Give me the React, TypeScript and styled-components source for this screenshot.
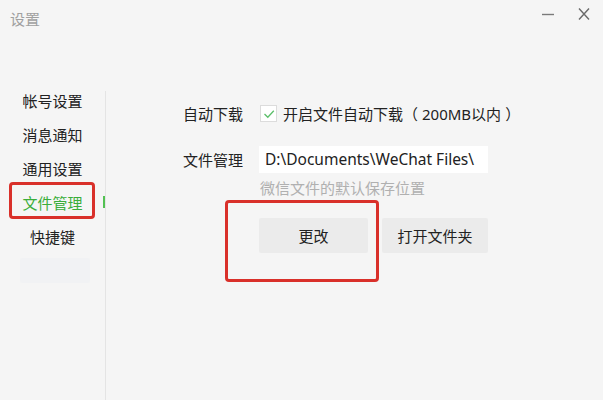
import React from "react";
import styled, { createGlobalStyle } from "styled-components";

const Global = createGlobalStyle`
  html, body { margin: 0; padding: 0; background: #f5f5f5; }
  body { font-family: "Noto Sans", "Noto Sans CJK SC", sans-serif; color: #333; }
`;

const Window = styled.div`
  width: 603px;
  height: 400px;
  background: #f5f5f5;
  display: flex;
  flex-direction: column;
  overflow: hidden;
`;

const TitleBar = styled.div`
  height: 40px;
  display: flex;
  align-items: flex-start;
  justify-content: space-between;
  padding: 0 12px 0 10px;
`;

const Title = styled.div`
  font-family: "Noto Sans CJK SC", sans-serif;
  font-size: 15px;
  line-height: 20px;
  margin-top: 9px;
  color: #a0a0a0;
`;

const WinControls = styled.div`
  display: flex;
  gap: 22px;
  margin-top: 7px;
`;

const CtrlBtn = styled.div`
  width: 14px;
  height: 14px;
  display: flex;
  align-items: center;
  justify-content: center;
`;

const Body = styled.div`
  flex: 1;
  display: flex;
  margin-top: 51px;
`;

const Sidebar = styled.div`
  width: 105px;
  border-right: 1px solid #e4e4e4;
  display: flex;
  flex-direction: column;
  gap: 14px;
`;

const NavItem = styled.div<{ $active?: boolean }>`
  position: relative;
  height: 20px;
  line-height: 20px;
  text-align: center;
  font-family: "Noto Sans CJK SC", sans-serif;
  font-size: 15px;
  color: ${(p) => (p.$active ? "#3aae3a" : "#222")};
  ${(p) =>
    p.$active &&
    `
    &::before {
      content: "";
      position: absolute;
      right: 0;
      top: 3px;
      width: 2px;
      height: 12px;
      background: #52c152;
    }
  `}
`;

const Highlight = styled.span`
  position: relative;
  &::after {
    content: "";
    position: absolute;
    left: -13px;
    right: -12px;
    top: -10px;
    bottom: -6px;
    border: 3px solid #d9302a;
    border-radius: 4px;
  }
`;

const GhostItem = styled.div`
  margin: 0 15px 0 20px;
  height: 25px;
  margin-top: -3px;
  background: #f1f2f4;
  border-radius: 2px;
`;

const Content = styled.div`
  position: relative;
  flex: 1;
  padding: 9px 0 0 77px;
  display: flex;
  flex-direction: column;
`;

const Row = styled.div<{ $gap?: number }>`
  display: flex;
  align-items: center;
  height: 27px;
  margin-top: ${(p) => p.$gap ?? 0}px;
`;

const Label = styled.div`
  width: 76px;
  font-family: "Noto Sans CJK SC", sans-serif;
  font-size: 15px;
  color: #222;
`;

const Checkbox = styled.div`
  width: 15px;
  height: 15px;
  background: #fff;
  border: 1px solid #dcdcdc;
  display: flex;
  align-items: center;
  justify-content: center;
  margin-left: 1px;
  margin-right: 6px;
`;

const CheckText = styled.div`
  font-family: "Noto Sans CJK SC", sans-serif;
  font-size: 15px;
  color: #222;
`;

const Inner = styled.span`
  font-family: "Noto Sans", "Noto Sans CJK SC", sans-serif;
  margin: 0 4px;
`;

const PathInput = styled.div`
  width: 223px;
  height: 27px;
  background: #fff;
  padding-left: 6px;
  font-size: 15.5px;
  line-height: 27px;
  color: #222;
  white-space: nowrap;
  overflow: hidden;
`;

const Hint = styled.div`
  margin: 5px 0 0 77px;
  font-family: "Noto Sans CJK SC", sans-serif;
  font-size: 15px;
  line-height: 20px;
  color: #b0b0b0;
`;

const Buttons = styled.div`
  display: flex;
  gap: 14px;
  margin: 20px 0 0 76px;
`;

const Button = styled.div<{ $w: number }>`
  width: ${(p) => p.$w}px;
  height: 35px;
  background: #ebebeb;
  border-radius: 2px;
  display: flex;
  align-items: center;
  justify-content: center;
  font-family: "Noto Sans CJK SC", sans-serif;
  font-size: 15px;
  color: #222;
`;

const Annotation = styled.div`
  position: absolute;
  left: 119px;
  top: 109px;
  width: 148px;
  height: 76px;
  border: 3px solid #d9302a;
  border-radius: 4px;
  pointer-events: none;
`;

export default function App() {
  return (
    <>
      <Global />
      <Window>
        <TitleBar>
          <Title>设置</Title>
          <WinControls>
            <CtrlBtn>
              <svg width="14" height="14" viewBox="0 0 14 14">
                <line x1="1" y1="7.5" x2="13" y2="7.5" stroke="#7a7a7a" strokeWidth="1.4" />
              </svg>
            </CtrlBtn>
            <CtrlBtn>
              <svg width="14" height="14" viewBox="0 0 14 14">
                <path d="M2 1.5 L12 12.5 M12 1.5 L2 12.5" stroke="#6a6a6a" strokeWidth="1.4" fill="none" />
              </svg>
            </CtrlBtn>
          </WinControls>
        </TitleBar>
        <Body>
          <Sidebar>
            <NavItem>帐号设置</NavItem>
            <NavItem>消息通知</NavItem>
            <NavItem>通用设置</NavItem>
            <NavItem $active>
              <Highlight>文件管理</Highlight>
            </NavItem>
            <NavItem>快捷键</NavItem>
            <GhostItem />
          </Sidebar>
          <Content>
            <Row>
              <Label>自动下载</Label>
              <Checkbox>
                <svg width="12" height="12" viewBox="0 0 12 12">
                  <path d="M1.5 6 L4.8 9.2 L10.8 2.8" stroke="#5cbf6a" strokeWidth="1.3" fill="none" />
                </svg>
              </Checkbox>
              <CheckText>
                开启文件自动下载（<Inner>200MB以内</Inner>）
              </CheckText>
            </Row>
            <Row $gap={19}>
              <Label>文件管理</Label>
              <PathInput>D:\Documents\WeChat Files\</PathInput>
            </Row>
            <Hint>微信文件的默认保存位置</Hint>
            <Buttons>
              <Button $w={109}>更改</Button>
              <Button $w={106}>打开文件夹</Button>
            </Buttons>
            <Annotation />
          </Content>
        </Body>
      </Window>
    </>
  );
}
